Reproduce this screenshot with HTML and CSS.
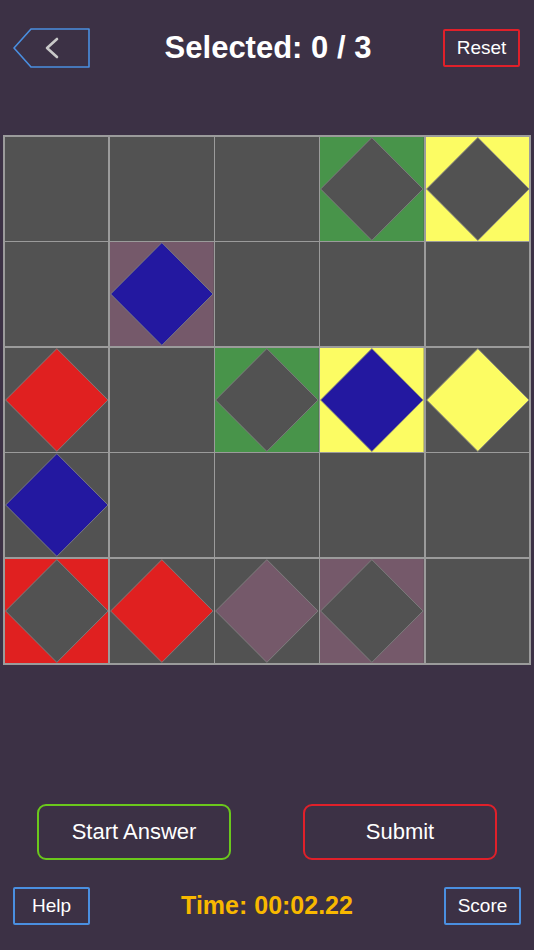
FILE: index.html
```html
<!DOCTYPE html>
<html lang="en">
<head>
    <meta charset="UTF-8">
    <meta name="viewport" content="width=device-width, initial-scale=1.0">
    <title>Selected</title>
    <link rel="stylesheet" href="styles.css">
</head>
<body>
    <div class="screen">
        <header class="top-bar">
            <button class="back-btn" type="button" aria-label="Back">
                <svg width="78" height="40" viewBox="0 0 78 40">
                    <polygon points="18,1 76,1 76,39 18,39 1,20" fill="none" stroke="#4a8fe0" stroke-width="1.6" stroke-linejoin="round"/>
                    <polyline points="44,11 34,20 44,29" fill="none" stroke="#c9c9c9" stroke-width="2.6" stroke-linecap="round" stroke-linejoin="round"/>
                </svg>
            </button>
            <h1 class="title">Selected: 0 / 3</h1>
            <button class="small-btn red" type="button">Reset</button>
        </header>

        <div class="board" id="board"></div>

        <div class="actions">
            <button class="big-btn green" type="button">Start Answer</button>
            <button class="big-btn red" type="button">Submit</button>
        </div>

        <footer class="bottom-bar">
            <button class="small-btn blue" type="button">Help</button>
            <div class="timer">Time: 00:02.22</div>
            <button class="small-btn blue" type="button">Score</button>
        </footer>
    </div>

    <script>
        // [background, diamond] for each cell, null = empty
        const G = '#525252';
        const colors = {
            g: '#48944a',
            y: '#fcfc63',
            r: '#e02020',
            p: '#75596a',
            b: '#2318a0'
        };

        const cells = [
            null, null, null, ['g', G], ['y', G],
            null, ['p', 'b'], null, null, null,
            [G, 'r'], null, ['g', G], ['y', 'b'], [G, 'y'],
            [G, 'b'], null, null, null, null,
            ['r', G], [G, 'r'], [G, 'p'], ['p', G], null
        ];

        function col(c) {
            return colors[c] || c;
        }

        const board = document.getElementById('board');
        cells.forEach(item => {
            let cell = document.createElement('div');
            cell.className = 'cell';
            if (item) {
                cell.innerHTML =
                    '<svg viewBox="0 0 100 100" preserveAspectRatio="none">' +
                    '<rect width="100" height="100" fill="' + col(item[0]) + '"/>' +
                    '<polygon points="50,0.6 99.4,50 50,99.4 0.6,50" fill="' + col(item[1]) + '" stroke="#7f7f7f" stroke-width="0.9"/>' +
                    '</svg>';
            }
            board.appendChild(cell);
        });
    </script>
</body>
</html>
```

FILE: styles.css
```css
* {
    box-sizing: border-box;
}

body {
    margin: 0;
    padding: 0;
    background-color: #3c3145;
    font-family: 'Liberation Sans', Arial, sans-serif;
    color: #fff;
}

.screen {
    width: 534px;
    height: 950px;
    display: flex;
    flex-direction: column;
    align-items: center;
}

button {
    font-family: inherit;
    color: #fff;
    background: transparent;
    padding: 0;
    cursor: pointer;
}

.top-bar {
    width: 100%;
    height: 38px;
    margin-top: 29px;
    padding: 0 13px 0 13px;
    display: flex;
    align-items: center;
    justify-content: space-between;
}

.back-btn {
    border: 0;
    width: 78px;
    height: 40px;
    display: block;
}

.back-btn svg {
    display: block;
}

.title {
    margin: 0 0 0 2px;
    font-size: 31px;
    font-weight: bold;
}

.small-btn {
    width: 77px;
    height: 38px;
    border: 2px solid;
    border-radius: 2px;
    font-size: 19px;
}

.small-btn.red {
    border-color: #e0202a;
    margin-right: 1px;
}

.small-btn.blue {
    border-color: #4a8fe0;
}

.board {
    width: 528px;
    margin-top: 68px;
    display: grid;
    grid-template-columns: repeat(5, 1fr);
    grid-auto-rows: 104px;
    gap: 1.6px;
    padding: 1.6px;
    background-color: #9b9b9b;
}

.cell {
    background-color: #525252;
}

.cell svg {
    display: block;
    width: 100%;
    height: 100%;
}

.actions {
    width: 100%;
    margin-top: 139px;
    padding: 0 37px;
    display: flex;
    justify-content: space-between;
}

.big-btn {
    width: 194px;
    height: 56px;
    border: 2px solid;
    border-radius: 9px;
    font-size: 22px;
}

.big-btn.green {
    border-color: #6bc81c;
}

.big-btn.red {
    border-color: #e0202a;
}

.bottom-bar {
    width: 100%;
    margin-top: 27px;
    padding: 0 13px 0 13px;
    display: flex;
    align-items: center;
    justify-content: space-between;
}

.timer {
    font-size: 25px;
    font-weight: bold;
    color: #f8b800;
}
```
